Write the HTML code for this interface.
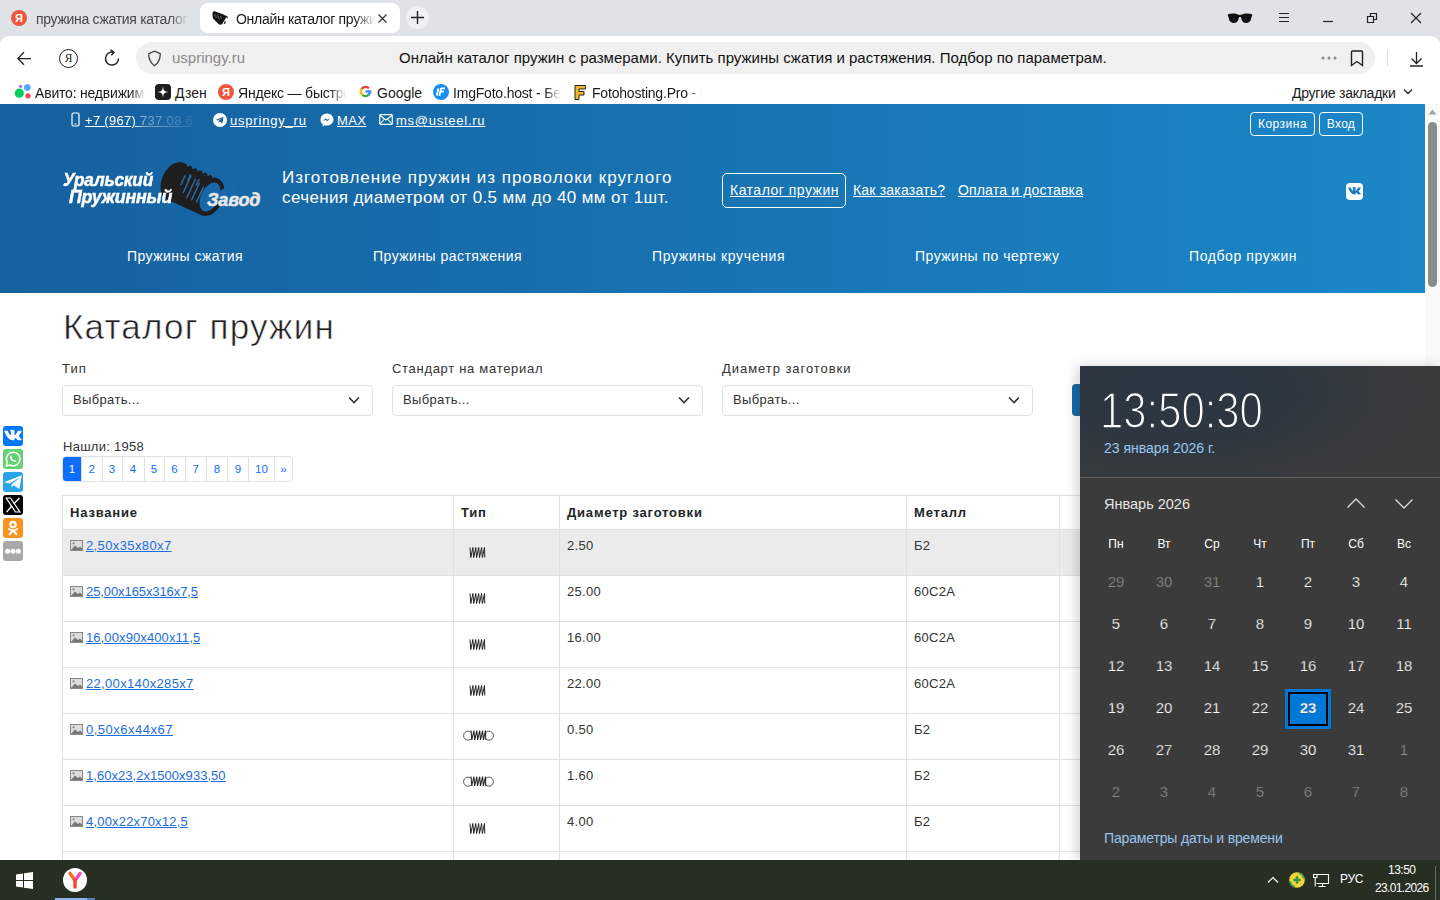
<!DOCTYPE html>
<html><head><meta charset="utf-8">
<style>
*{margin:0;padding:0;box-sizing:border-box}
html,body{width:1440px;height:900px;overflow:hidden;background:#fff;font-family:"Liberation Sans",sans-serif;color:#212529}
.a{position:absolute;white-space:nowrap}
#tabbar{position:absolute;left:0;top:0;width:1440px;height:46px;background:#dfe2e7}
#toolbar{position:absolute;left:0;top:36px;width:1440px;height:40px;background:#fff;border-radius:9px 9px 0 0}
#bmbar{position:absolute;left:0;top:76px;width:1440px;height:28px;background:#fff}
#header{position:absolute;left:0;top:104px;width:1425px;height:189px;background:linear-gradient(90deg,#16609f 0%,#1873b2 50%,#1b87c7 100%)}
#scroll{position:absolute;left:1425px;top:104px;width:15px;height:756px;background:#f9f9f9}
#taskbar{position:absolute;left:0;top:860px;width:1440px;height:40px;background:#272e22}
#cal{position:absolute;left:1080px;top:366px;width:360px;height:494px;background:#3b3b3b;box-shadow:-3px 0 12px rgba(0,0,0,0.18)}
.sel{position:absolute;top:385px;width:311px;height:31px;border:1px solid #dee2e6;border-radius:4px;background:#fff}
.sel span{position:absolute;left:10px;top:6px;font-size:13px;letter-spacing:0.35px;color:#333}
.sel svg{position:absolute;left:285px;top:10px}
.pg{position:absolute;left:62px;top:456px;height:26px;display:flex;border:1px solid #dee2e6;border-radius:4px;overflow:hidden}
.pg div{height:24px;border-left:1px solid #dee2e6;font-size:11.5px;color:#0d6efd;text-align:center;line-height:24px}
.pg div:first-child{border-left:none;width:18px}
.pg .act{background:#0d6efd;color:#fff}
.sh{position:absolute;left:3px;width:20px;height:20px;border-radius:3px}
.sh svg{position:absolute;left:0;top:0}
.tb{border-collapse:collapse;table-layout:fixed;width:1197px}
.tb td{border:1px solid #dee2e6;padding:0 7px;vertical-align:top;font-size:13px;letter-spacing:0.3px;color:#333;height:46px;padding-top:7.5px}
.tb tr.th td{height:34px;letter-spacing:0.8px;font-weight:bold;color:#212529;padding-top:9px}
.tb tr.hl td{background:#ebebeb}
.tb a{color:#1b6dde;text-decoration:underline;letter-spacing:0.4px}
.ty{margin-top:9px;margin-left:7.5px;line-height:0}
.ty.tye{margin-left:1px;margin-top:8.5px}
.cd{position:absolute;width:40px;text-align:center;white-space:nowrap;-webkit-text-stroke:0.25px #3b3b3b}
.logo{font-size:18px;line-height:20px;font-weight:bold;font-style:italic;color:#fff;-webkit-text-stroke:0.5px currentColor;letter-spacing:-0.2px}
</style></head><body>

<div id="tabbar">
  <!-- tab 1 -->
  <div class="a" style="left:11px;top:10px;width:16px;height:16px;border-radius:50%;background:#f0553d;color:#fff;font-size:11px;font-weight:bold;text-align:center;line-height:16px">Я</div>
  <div class="a" style="left:36px;top:11px;width:152px;overflow:hidden;font-size:14px;letter-spacing:-0.3px;color:#474747;-webkit-mask-image:linear-gradient(90deg,#000 88%,transparent)">пружина сжатия каталог пружин</div>
  <!-- active tab -->
  <div class="a" style="left:200px;top:3px;width:200px;height:30px;background:#fff;border-radius:8px"></div>
  <svg class="a" style="left:205px;top:5px" width="30" height="25" viewBox="0 0 30 25"><path d="M7.5 8.5C7.5 6.5 9 6 10.5 6.5L18.5 9.5C20.5 10.300 21.500 11.500 20.500 13.500L17.500 18.500C16.500 20 15 20 13.500 19L8.500 14C7.500 12.800 7.500 10.500 7.500 8.500Z" fill="#151515"/><path d="M9.5 9L11.500 13M12.500 10L14.500 14.500M15.500 11L17 15" stroke="#777" stroke-width="0.8"/><path d="M20.5 11.5C22 11 22.500 12.500 21.800 13.200M19.500 16.500C20.500 16.500 20.200 18 19 18.800" stroke="#222" stroke-width="1.3" fill="none"/><path d="M21 11.2C17.500 11.500 15.500 16 16.500 18.800" stroke="#111" stroke-width="1.5" fill="none"/></svg>
  <div class="a" style="left:236px;top:11px;width:140px;overflow:hidden;font-size:14px;letter-spacing:-0.3px;color:#1a1a1a;-webkit-mask-image:linear-gradient(90deg,#000 85%,transparent)">Онлайн каталог пружин с размерами</div>
  <svg class="a" style="left:377px;top:13px" width="11" height="11" viewBox="0 0 11 11"><path d="M1.5 1.5L9.5 9.5M9.5 1.5L1.5 9.5" stroke="#333" stroke-width="1.2"/></svg>
  <div class="a" style="left:406px;top:6px;width:23px;height:23px;border-radius:50%;background:#eef0f3"></div>
  <svg class="a" style="left:410px;top:10px" width="15" height="15" viewBox="0 0 15 15"><path d="M7.5 1V14M1 7.5H14" stroke="#222" stroke-width="1.4"/></svg>
  <!-- right icons -->
  <svg class="a" style="left:1227px;top:13px" width="26" height="11" viewBox="0 0 26 11"><path d="M0.5 1.5C4 0.2 8.5 0.3 12 2C13.5 1.5 14.5 1.5 14 2C17.5 0.3 22 0.2 25.5 1.5L24.500 4C24 8.500 21.500 10 19 10C15.500 10 14.500 7 14 4.300C13.500 4 12.500 4 12 4.300C11.500 7 10.500 10 7 10C4.500 10 2 8.500 1.500 4Z" fill="#111"/></svg>
  <svg class="a" style="left:1278px;top:12px" width="12" height="11" viewBox="0 0 12 11"><path d="M1 1.5H11M1 5.5H11M1 9.5H11" stroke="#222" stroke-width="1.2"/></svg>
  <svg class="a" style="left:1322px;top:20px" width="12" height="4" viewBox="0 0 12 4"><path d="M1 1.5H11" stroke="#222" stroke-width="1.2"/></svg>
  <svg class="a" style="left:1366px;top:12px" width="12" height="12" viewBox="0 0 12 12"><path d="M1.5 4.5H7.5V10.5H1.5Z M4.5 4.5V1.5H10.5V7.5H7.5" stroke="#222" stroke-width="1.2" fill="none"/></svg>
  <svg class="a" style="left:1410px;top:12px" width="12" height="12" viewBox="0 0 12 12"><path d="M1 1L11 11M11 1L1 11" stroke="#222" stroke-width="1.2"/></svg>
</div>
<div id="toolbar">
  <svg class="a" style="left:16px;top:15px" width="16" height="15" viewBox="0 0 16 15"><path d="M15 7.5H1.8M8 1.2L1.800 7.500L8 13.800" stroke="#222" stroke-width="1.25" fill="none"/></svg>
  <div class="a" style="left:59px;top:13px;width:19px;height:19px;border:1.3px solid #222;border-radius:50%;font-size:11.5px;line-height:16.5px;text-align:center;color:#222;font-family:'Liberation Serif',serif">Я</div>
  <svg class="a" style="left:104px;top:13px" width="17" height="18" viewBox="0 0 17 18"><path d="M14.5 9.5A6.5 6.5 0 1 1 9 3.2" stroke="#222" stroke-width="1.5" fill="none"/><path d="M6.5 0.8L10 3.3L7.3 6.3" stroke="#222" stroke-width="1.5" fill="none"/></svg>
  <div class="a" style="left:136px;top:6px;width:1239px;height:32px;background:#f0f0f0;border-radius:16px"></div>
  <svg class="a" style="left:147px;top:14px" width="15" height="17" viewBox="0 0 15 17"><path d="M7.5 1.2L13.3 3.6C13.3 10 11 13.5 7.5 15.8C4 13.5 1.7 10 1.7 3.6Z" stroke="#444" stroke-width="1.3" fill="none"/></svg>
  <div class="a" style="left:172px;top:13px;font-size:15px;color:#8a8a8a">uspringy.ru</div>
  <div class="a" style="left:399px;top:13px;font-size:15px;color:#111">Онлайн каталог пружин с размерами. Купить пружины сжатия и растяжения. Подбор по параметрам.</div>
  <svg class="a" style="left:1321px;top:20px" width="16" height="4" viewBox="0 0 16 4"><circle cx="2" cy="2" r="1.5" fill="#888"/><circle cx="8" cy="2" r="1.5" fill="#888"/><circle cx="14" cy="2" r="1.5" fill="#888"/></svg>
  <svg class="a" style="left:1350px;top:14px" width="14" height="17" viewBox="0 0 14 17"><path d="M1.5 2C1.5 1.5 2 1 2.5 1H11.5C12 1 12.5 1.5 12.5 2V15.5L7 11.5L1.5 15.5Z" stroke="#222" stroke-width="1.4" fill="none"/></svg>
  <div class="a" style="left:1387px;top:14px;width:1px;height:16px;background:#ddd"></div>
  <svg class="a" style="left:1409px;top:15px" width="15" height="16" viewBox="0 0 15 16"><path d="M7.5 1V12.5M2.5 7.5L7.5 12.5L12.5 7.5M1 15H14" stroke="#222" stroke-width="1.3" fill="none"/></svg>
</div>
<div id="bmbar">
  <svg class="a" style="left:14px;top:8px" width="18" height="17" viewBox="0 0 18 17"><circle cx="5.3" cy="9.2" r="4.6" fill="#00d25f"/><circle cx="13.3" cy="3.6" r="3.3" fill="#49a9ff"/><circle cx="14" cy="11.8" r="2.6" fill="#ff4053"/><circle cx="6.5" cy="2.3" r="1.6" fill="#a169f7"/></svg>
  <div class="a" style="left:35px;top:8.5px;letter-spacing:-0.2px;width:110px;overflow:hidden;font-size:14px;color:#1a1a1a;-webkit-mask-image:linear-gradient(90deg,#000 88%,transparent)">Авито: недвижимость</div>
  <div class="a" style="left:155px;top:8px;width:16px;height:16px;border-radius:4px;background:#1e1e1e"></div>
  <svg class="a" style="left:155px;top:8px" width="16" height="16" viewBox="0 0 16 16"><path d="M8 2.5C8.4 6.5 9.5 7.6 13.5 8C9.5 8.4 8.4 9.5 8 13.5C7.6 9.5 6.5 8.4 2.5 8C6.5 7.6 7.6 6.5 8 2.5Z" fill="#fff"/></svg>
  <div class="a" style="left:175px;top:8.5px;font-size:14px;color:#1a1a1a">Дзен</div>
  <div class="a" style="left:218px;top:8px;width:16px;height:16px;border-radius:50%;background:#f0553d;color:#fff;font-size:11px;font-weight:bold;text-align:center;line-height:16px">Я</div>
  <div class="a" style="left:238px;top:8.5px;letter-spacing:-0.2px;width:108px;overflow:hidden;font-size:14px;color:#1a1a1a;-webkit-mask-image:linear-gradient(90deg,#000 85%,transparent)">Яндекс — быстрый поиск</div>
  <svg class="a" style="left:359px;top:9px" width="13" height="13" viewBox="0 0 13 13"><path d="M11.10 6.50A4.6 4.6 0 0 1 9.46 10.02" stroke="#4285f4" stroke-width="2.4" fill="none"/><path d="M9.58 9.92A4.6 4.6 0 0 1 3.25 9.75" stroke="#34a853" stroke-width="2.4" fill="none"/><path d="M3.36 9.86A4.6 4.6 0 0 1 2.73 3.86" stroke="#fbbc05" stroke-width="2.4" fill="none"/><path d="M2.64 3.99A4.6 4.6 0 0 1 9.92 3.42" stroke="#ea4335" stroke-width="2.4" fill="none"/><path d="M6.5 6.5H12.30" stroke="#4285f4" stroke-width="2.3"/></svg>
  <div class="a" style="left:377px;top:8.5px;font-size:14px;color:#1a1a1a">Google</div>
  <svg class="a" style="left:433px;top:8px" width="16" height="16" viewBox="0 0 16 16"><circle cx="8" cy="8" r="8" fill="#1a8ff0"/><path d="M5.3 4.5L3.8 11.5M8 4.3H12M7.600 7.600H10.800M8 4.300L6.400 12" stroke="#fff" stroke-width="1.8" fill="none"/></svg>
  <div class="a" style="left:453px;top:8.5px;letter-spacing:-0.2px;width:108px;overflow:hidden;font-size:14px;color:#1a1a1a;-webkit-mask-image:linear-gradient(90deg,#000 85%,transparent)">ImgFoto.host - Бесплатный</div>
  <svg class="a" style="left:573px;top:8px" width="14" height="17" viewBox="0 0 14 17"><path d="M2 1.5H12.5V5H6V7.5H11V11H6V15.5H2Z" fill="#f5b82e" stroke="#222" stroke-width="1"/></svg>
  <div class="a" style="left:592px;top:8.5px;letter-spacing:-0.2px;width:110px;overflow:hidden;font-size:14px;color:#1a1a1a;-webkit-mask-image:linear-gradient(90deg,#000 88%,transparent)">Fotohosting.Pro - Бесплатный</div>
  <div class="a" style="left:1292px;top:8.5px;font-size:14px;letter-spacing:-0.25px;color:#1a1a1a">Другие закладки</div>
  <svg class="a" style="left:1403px;top:12px" width="10" height="7" viewBox="0 0 10 7"><path d="M1 1.5L5 5.5L9 1.5" stroke="#222" stroke-width="1.3" fill="none"/></svg>
</div>

<div id="header">
  <!-- contacts row (y relative to 104) -->
  <svg class="a" style="left:71px;top:8px" width="9" height="15" viewBox="0 0 9 15"><rect x="1" y="1" width="7" height="13" rx="1.5" stroke="#fff" stroke-width="1.2" fill="none"/><path d="M3.5 12H5.5" stroke="#fff" stroke-width="1"/></svg>
  <div class="a" style="left:85px;top:9px;letter-spacing:0.3px;font-size:13px;color:#fff;text-decoration:underline;-webkit-mask-image:linear-gradient(90deg,#000 45%,rgba(0,0,0,.45) 55%,rgba(0,0,0,.25) 80%,rgba(0,0,0,.1))">+7 (967) 737 08 6</div>
  <svg class="a" style="left:213px;top:9px" width="14" height="14" viewBox="0 0 14 14"><circle cx="7" cy="7" r="7" fill="#fff"/><path d="M3 6.8L10.5 3.8L9.3 10.5L6.8 8.6L5.6 9.8L5.6 8L9 5L4.8 7.6Z" fill="#1a5f9e"/></svg>
  <div class="a" style="left:230px;top:9px;letter-spacing:0.8px;font-size:13px;color:#fff;text-decoration:underline">uspringy_ru</div>
  <svg class="a" style="left:320px;top:9px" width="14" height="14" viewBox="0 0 14 14"><path d="M7 0.5C3.2 0.5 0.5 3.3 0.5 6.7C0.5 8.6 1.3 10.2 2.7 11.3V13.5L4.8 12.3C5.5 12.5 6.2 12.6 7 12.6C10.8 12.6 13.5 9.9 13.5 6.6C13.5 3.3 10.8 0.5 7 0.5Z" fill="#fff"/><path d="M2.8 8.3L5.8 5.2L7.3 6.8L10.3 5.2L7.3 8.3L5.8 6.8Z" fill="#1a5f9e"/></svg>
  <div class="a" style="left:337px;top:9px;letter-spacing:0.35px;font-size:13px;color:#fff;text-decoration:underline">MAX</div>
  <svg class="a" style="left:379px;top:10px" width="14" height="11" viewBox="0 0 14 11"><rect x="0.7" y="0.7" width="12.6" height="9.6" rx="1" stroke="#fff" stroke-width="1.2" fill="none"/><path d="M1 1.5L7 6L13 1.5M1 10L5 5.5M13 10L9 5.5" stroke="#fff" stroke-width="1.1" fill="none"/></svg>
  <div class="a" style="left:396px;top:9px;letter-spacing:0.74px;font-size:13px;color:#fff;text-decoration:underline">ms@usteel.ru</div>
  <div class="a" style="left:1250px;top:8px;width:65px;height:24px;border:1px solid #fff;border-radius:4px;font-size:12px;letter-spacing:0.5px;color:#fff;text-align:center;line-height:22px">Корзина</div>
  <div class="a" style="left:1319px;top:8px;width:44px;height:24px;border:1px solid #fff;border-radius:4px;font-size:12px;letter-spacing:0.3px;color:#fff;text-align:center;line-height:22px">Вход</div>
  <!-- logo -->
  <svg class="a" style="left:0;top:0" width="300" height="189" viewBox="0 0 300 189">
    <g fill="#1e1e1e">
      <ellipse cx="175" cy="77" rx="13" ry="20" transform="rotate(24.6 175 77)"/>
      <polygon points="183.3,58.8 218.3,74.8 201.7,111.2 166.7,95.2"/>
      <ellipse cx="210" cy="93" rx="13" ry="20" transform="rotate(24.6 210 93)"/>
    </g>
    <path d="M185.0 71.7L180.9 80.8" stroke="#2d6aa3" stroke-width="1.5" stroke-linecap="round"/><path d="M190.8 72.1L183.3 88.5" stroke="#2d6aa3" stroke-width="1.5" stroke-linecap="round"/><path d="M195.3 75.3L186.9 93.5" stroke="#2d6aa3" stroke-width="1.5" stroke-linecap="round"/><path d="M199.3 79.3L191.8 95.7" stroke="#2d6aa3" stroke-width="1.5" stroke-linecap="round"/><path d="M203.4 83.4L196.7 97.9" stroke="#2d6aa3" stroke-width="1.5" stroke-linecap="round"/><path d="M190.5 70.9L188.0 76.3" stroke="#2d6aa3" stroke-width="1.5" stroke-linecap="round"/><path d="M198.8 75.8L196.3 81.3" stroke="#2d6aa3" stroke-width="1.5" stroke-linecap="round"/><circle cx="188.1" cy="61.6" r="1.1" fill="#1868a9"/><circle cx="193.1" cy="63.9" r="1.1" fill="#1868a9"/><circle cx="198.1" cy="66.2" r="1.1" fill="#1868a9"/><circle cx="203.1" cy="68.5" r="1.1" fill="#1868a9"/><circle cx="208.1" cy="70.8" r="1.1" fill="#1868a9"/><circle cx="213.1" cy="73.1" r="1.1" fill="#1868a9"/>
    <ellipse cx="210" cy="93" rx="9" ry="15.5" transform="rotate(24.6 210 93)" fill="#1868a9"/>
    <path d="M210 93 L235 78 L235 109 Z" fill="#1868a9"/>
  </svg>
  <div class="a logo" style="left:63px;top:65.5px;transform:scaleX(0.955);transform-origin:0 0">Уральский</div>
  <div class="a logo" style="left:69px;top:83px;transform:scaleX(0.99);transform-origin:0 0">Пружинный</div>
  <div class="a logo" style="left:207px;top:85.5px;color:#e8e8e8;transform:scaleX(1.0);transform-origin:0 0">Завод</div>
  <!-- tagline -->
  <div class="a" style="left:282px;top:64px;font-size:17px;line-height:19.7px;color:#fff"><span style="letter-spacing:0.98px">Изготовление пружин из проволоки круглого</span><br><span style="letter-spacing:0.38px">сечения диаметром от 0.5 мм до 40 мм от 1шт.</span></div>
  <div class="a" style="left:722px;top:69px;width:124px;height:35px;border:1px solid #fff;border-radius:5px"></div>
  <div class="a" style="left:730px;top:78px;letter-spacing:0.49px;font-size:14px;color:#fff;text-decoration:underline">Каталог пружин</div>
  <div class="a" style="left:853px;top:78px;letter-spacing:0.2px;font-size:14px;color:#fff;text-decoration:underline">Как заказать?</div>
  <div class="a" style="left:958px;top:78px;letter-spacing:0.16px;font-size:14px;color:#fff;text-decoration:underline">Оплата и доставка</div>
  <div class="a" style="left:1346px;top:79px;width:17px;height:17px;border-radius:4px;background:#fff"></div>
  <svg class="a" style="left:1346px;top:79px" width="17" height="17" viewBox="0 0 20 20"><path d="M11 15.5C11.5 15.5 11.7 15.1 11.7 14.7C11.7 13.1 12.300 12.200 13.400 13.300C14.600 14.600 14.900 15.500 16.400 15.500H19C19.700 15.500 19.900 15.300 19.900 14.900C19.900 14.200 18.700 12.900 17.700 12C16.300 10.700 16.300 10.700 17.500 9.100C19 7.200 20.900 4.600 19.200 4.600H15.900C15.200 4.600 15.200 5 15 5.500C14.200 7.500 12.600 10 12 9.600C11.400 9.200 11.700 7.600 11.700 5.200C11.700 4.600 11.700 4.100 10.700 3.900C10.200 3.800 9.700 3.700 9.200 3.700C7.300 3.700 6 4.500 6.800 4.700C8.100 4.900 8 7.700 7.700 9C7.200 11.100 5.200 7.300 4.300 5.400C4.100 4.900 4.100 4.600 3.400 4.600H0.700C0.300 4.600 0 4.700 0 5C0 5.500 2.500 10.600 4.800 13.100C7.100 15.600 9.400 15.500 11 15.500Z" transform="translate(2.5 1.8) scale(0.75)" fill="#1b7dbd"/></svg>
  <!-- nav -->
  <div class="a" style="left:127px;top:144px;letter-spacing:0.46px;font-size:14px;color:#fff">Пружины сжатия</div>
  <div class="a" style="left:373px;top:144px;letter-spacing:0.47px;font-size:14px;color:#fff">Пружины растяжения</div>
  <div class="a" style="left:652px;top:144px;letter-spacing:0.66px;font-size:14px;color:#fff">Пружины кручения</div>
  <div class="a" style="left:915px;top:144px;letter-spacing:0.47px;font-size:14px;color:#fff">Пружины по чертежу</div>
  <div class="a" style="left:1189px;top:144px;letter-spacing:0.59px;font-size:14px;color:#fff">Подбор пружин</div>
</div>
<div id="scroll">
  <svg class="a" style="left:3px;top:5px" width="9" height="6" viewBox="0 0 9 6"><path d="M0.5 5.5L4.5 0.5L8.5 5.5Z" fill="#a3a3a3"/></svg>
  <div class="a" style="left:3px;top:18px;width:9px;height:165px;border-radius:5px;background:#8b8b8b"></div>
</div>
<div id="content">
  <div class="a" style="left:63px;top:307px;font-size:35px;letter-spacing:1.2px;color:#222;-webkit-text-stroke:0.6px #fff">Каталог пружин</div>
  <div class="a" style="left:62px;top:361px;font-size:13px;letter-spacing:1.1px;color:#333">Тип</div>
  <div class="a" style="left:392px;top:361px;font-size:13px;letter-spacing:0.7px;color:#333">Стандарт на материал</div>
  <div class="a" style="left:722px;top:361px;font-size:13px;letter-spacing:0.95px;color:#333">Диаметр заготовки</div>
  <div class="sel" style="left:62px"><span>Выбрать...</span><svg width="12" height="8" viewBox="0 0 12 8"><path d="M1 1.5L6 6.5L11 1.5" stroke="#333" stroke-width="1.6" fill="none"/></svg></div>
  <div class="sel" style="left:392px"><span>Выбрать...</span><svg width="12" height="8" viewBox="0 0 12 8"><path d="M1 1.5L6 6.5L11 1.5" stroke="#333" stroke-width="1.6" fill="none"/></svg></div>
  <div class="sel" style="left:722px"><span>Выбрать...</span><svg width="12" height="8" viewBox="0 0 12 8"><path d="M1 1.5L6 6.5L11 1.5" stroke="#333" stroke-width="1.6" fill="none"/></svg></div>
  <div class="a" style="left:1072px;top:384px;width:20px;height:32px;border-radius:4px;background:#1a6aa8"></div>
  <div class="a" style="left:63px;top:439px;font-size:13px;letter-spacing:0.27px;color:#333">Нашли: 1958</div>
  <div class="pg">
    <div class="act" style="width:18px">1</div><div style="width:20.5px">2</div><div style="width:20px">3</div><div style="width:22px">4</div><div style="width:20px">5</div><div style="width:21px">6</div><div style="width:21.5px">7</div><div style="width:21px">8</div><div style="width:21px">9</div><div style="width:26px">10</div><div style="width:18px">»</div>
  </div>
  <!-- share -->
  <div class="sh" style="top:426px;background:#0077ff"><svg width="20" height="20" viewBox="0 0 20 20"><path d="M11 15.5C11.5 15.5 11.7 15.1 11.7 14.7C11.7 13.1 12.300 12.200 13.400 13.300C14.600 14.600 14.900 15.500 16.400 15.500H19C19.700 15.500 19.900 15.300 19.900 14.900C19.900 14.200 18.700 12.900 17.700 12C16.300 10.700 16.300 10.700 17.500 9.100C19 7.200 20.900 4.600 19.200 4.600H15.900C15.200 4.600 15.200 5 15 5.500C14.200 7.500 12.600 10 12 9.600C11.400 9.200 11.700 7.600 11.700 5.200C11.700 4.600 11.700 4.100 10.700 3.900C10.200 3.800 9.700 3.700 9.200 3.700C7.300 3.700 6 4.500 6.800 4.700C8.100 4.900 8 7.700 7.700 9C7.200 11.100 5.200 7.300 4.300 5.400C4.100 4.900 4.100 4.600 3.400 4.600H0.700C0.300 4.600 0 4.700 0 5C0 5.500 2.500 10.600 4.800 13.100C7.100 15.600 9.400 15.500 11 15.500Z" transform="translate(1.2 0.6) scale(0.88)" fill="#fff"/></svg></div>
  <div class="sh" style="top:449px;background:#65d072"><svg width="20" height="20" viewBox="0 0 20 20"><path d="M10.2 3.2A6.8 6.8 0 0 0 4.3 13.400L3.200 17L7 16A6.800 6.800 0 1 0 10.200 3.200Z" fill="none" stroke="#fff" stroke-width="1.5"/><path d="M7.6 6.8C7.9 6.4 8.3 6.5 8.5 6.900L9.100 8.200C9.200 8.500 8.900 8.800 8.700 9C9.200 10.100 10 10.900 11.100 11.400C11.300 11.200 11.600 10.900 11.900 11L13.100 11.600C13.500 11.800 13.600 12.200 13.200 12.500C12.300 13.400 11.200 13.300 9.700 12.300C8.300 11.300 7.300 10 7 8.900C6.800 8 7.100 7.300 7.600 6.800Z" fill="#fff"/></svg></div>
  <div class="sh" style="top:472px;background:#2aa4e6"><svg width="20" height="20" viewBox="0 0 20 20"><path d="M1 10.200L18.800 3.300L16.300 17L10.600 13.300L8.300 15.400L8.800 12.100L15.300 6.300L6.600 11.600Z" fill="#fff"/><path d="M8.8 12.1L16 6" stroke="#2aa4e6" stroke-width="0.6"/></svg></div>
  <div class="sh" style="top:495px;background:#000"><svg width="20" height="20" viewBox="0 0 20 20"><path d="M3.2 3H7.600L16.900 17H12.500Z" fill="none" stroke="#fff" stroke-width="1.2"/><path d="M3.6 17L9.1 10.800M10.900 8.800L16.400 3" stroke="#fff" stroke-width="1.3"/></svg></div>
  <div class="sh" style="top:518px;background:#f7931e"><svg width="20" height="20" viewBox="0 0 20 20"><circle cx="10" cy="6.6" r="2.7" fill="none" stroke="#fff" stroke-width="2.1"/><path d="M6 11C8.300 12.600 11.700 12.600 14 11M10 12.300L6.600 16.300M10 12.300L13.400 16.300" stroke="#fff" stroke-width="2.1" fill="none" stroke-linecap="round"/></svg></div>
  <div class="sh" style="top:541px;background:#a8a8a8"><svg width="20" height="20" viewBox="0 0 20 20"><circle cx="4.6" cy="10.3" r="2.5" fill="#fff"/><circle cx="10" cy="10.3" r="2.5" fill="#fff"/><circle cx="15.4" cy="10.3" r="2.5" fill="#fff"/></svg></div>
  <!-- table -->
  <div class="a" style="left:62px;top:495px;width:1020px;height:365px;overflow:hidden">
  <table class="tb">
    <colgroup><col style="width:391px"><col style="width:106px"><col style="width:347px"><col style="width:153px"><col style="width:200px"></colgroup>
    <tr class="th"><td>Название</td><td>Тип</td><td>Диаметр заготовки</td><td>Металл</td><td></td></tr>
    <tr class="hl"><td><svg width="13" height="11" viewBox="0 0 13 11" style="vertical-align:-1px;margin-right:3px"><rect x="0" y="0" width="13" height="11" fill="#888"/><rect x="1" y="1" width="11" height="9" fill="#ddd"/><path d="M1 10L5 5.5L8 8L10 6.5L12 8.500V10Z" fill="#777"/><circle cx="3.5" cy="3.3" r="1.1" fill="#888"/></svg><a style="letter-spacing:0.38px">2,50x35x80x7</a></td><td><div class="ty tyc"><svg width="17" height="11" viewBox="0 0 17 11"><path d="M1 0.5L1.8 10.5L3.9 0.5L4.7 10.5L6.8 0.5L7.6 10.5L9.7 0.5L10.5 10.5L12.6 0.5L13.4 10.5L15.5 0.5L15.8 10.5" stroke="#222" stroke-width="1" fill="none"/></svg></div></td><td>2.50</td><td>Б2</td><td></td></tr><tr><td><svg width="13" height="11" viewBox="0 0 13 11" style="vertical-align:-1px;margin-right:3px"><rect x="0" y="0" width="13" height="11" fill="#888"/><rect x="1" y="1" width="11" height="9" fill="#ddd"/><path d="M1 10L5 5.5L8 8L10 6.5L12 8.500V10Z" fill="#777"/><circle cx="3.5" cy="3.3" r="1.1" fill="#888"/></svg><a style="letter-spacing:-0.09px">25,00x165x316x7,5</a></td><td><div class="ty tyc"><svg width="17" height="11" viewBox="0 0 17 11"><path d="M1 0.5L1.8 10.5L3.9 0.5L4.7 10.5L6.8 0.5L7.6 10.5L9.7 0.5L10.5 10.5L12.6 0.5L13.4 10.5L15.5 0.5L15.8 10.5" stroke="#222" stroke-width="1" fill="none"/></svg></div></td><td>25.00</td><td>60С2А</td><td></td></tr><tr><td><svg width="13" height="11" viewBox="0 0 13 11" style="vertical-align:-1px;margin-right:3px"><rect x="0" y="0" width="13" height="11" fill="#888"/><rect x="1" y="1" width="11" height="9" fill="#ddd"/><path d="M1 10L5 5.5L8 8L10 6.5L12 8.500V10Z" fill="#777"/><circle cx="3.5" cy="3.3" r="1.1" fill="#888"/></svg><a style="letter-spacing:0.1px">16,00x90x400x11,5</a></td><td><div class="ty tyc"><svg width="17" height="11" viewBox="0 0 17 11"><path d="M1 0.5L1.8 10.5L3.9 0.5L4.7 10.5L6.8 0.5L7.6 10.5L9.7 0.5L10.5 10.5L12.6 0.5L13.4 10.5L15.5 0.5L15.8 10.5" stroke="#222" stroke-width="1" fill="none"/></svg></div></td><td>16.00</td><td>60С2А</td><td></td></tr><tr><td><svg width="13" height="11" viewBox="0 0 13 11" style="vertical-align:-1px;margin-right:3px"><rect x="0" y="0" width="13" height="11" fill="#888"/><rect x="1" y="1" width="11" height="9" fill="#ddd"/><path d="M1 10L5 5.5L8 8L10 6.5L12 8.500V10Z" fill="#777"/><circle cx="3.5" cy="3.3" r="1.1" fill="#888"/></svg><a style="letter-spacing:0.33px">22,00x140x285x7</a></td><td><div class="ty tyc"><svg width="17" height="11" viewBox="0 0 17 11"><path d="M1 0.5L1.8 10.5L3.9 0.5L4.7 10.5L6.8 0.5L7.6 10.5L9.7 0.5L10.5 10.5L12.6 0.5L13.4 10.5L15.5 0.5L15.8 10.5" stroke="#222" stroke-width="1" fill="none"/></svg></div></td><td>22.00</td><td>60С2А</td><td></td></tr><tr><td><svg width="13" height="11" viewBox="0 0 13 11" style="vertical-align:-1px;margin-right:3px"><rect x="0" y="0" width="13" height="11" fill="#888"/><rect x="1" y="1" width="11" height="9" fill="#ddd"/><path d="M1 10L5 5.5L8 8L10 6.5L12 8.500V10Z" fill="#777"/><circle cx="3.5" cy="3.3" r="1.1" fill="#888"/></svg><a style="letter-spacing:0.5px">0,50x6x44x67</a></td><td><div class="ty tye"><svg width="33" height="11" viewBox="0 0 33 11"><path d="M9 0.5L9.8 10L11.9 0.5L12.7 10L14.8 0.5L15.6 10L17.7 0.5L18.5 10L20.6 0.5L21.4 10L23.5 0.5L23.8 10" stroke="#222" stroke-width="1.05" fill="none"/><path d="M9.3 2.5A4.5 4.5 0 1 0 9.3 8.8M23.7 2.5A4.5 4.5 0 1 1 23.7 8.8" stroke="#444" stroke-width="0.9" fill="none"/></svg></div></td><td>0.50</td><td>Б2</td><td></td></tr><tr><td><svg width="13" height="11" viewBox="0 0 13 11" style="vertical-align:-1px;margin-right:3px"><rect x="0" y="0" width="13" height="11" fill="#888"/><rect x="1" y="1" width="11" height="9" fill="#ddd"/><path d="M1 10L5 5.5L8 8L10 6.5L12 8.500V10Z" fill="#777"/><circle cx="3.5" cy="3.3" r="1.1" fill="#888"/></svg><a style="letter-spacing:0.04px">1,60x23,2x1500x933,50</a></td><td><div class="ty tye"><svg width="33" height="11" viewBox="0 0 33 11"><path d="M9 0.5L9.8 10L11.9 0.5L12.7 10L14.8 0.5L15.6 10L17.7 0.5L18.5 10L20.6 0.5L21.4 10L23.5 0.5L23.8 10" stroke="#222" stroke-width="1.05" fill="none"/><path d="M9.3 2.5A4.5 4.5 0 1 0 9.3 8.8M23.7 2.5A4.5 4.5 0 1 1 23.7 8.8" stroke="#444" stroke-width="0.9" fill="none"/></svg></div></td><td>1.60</td><td>Б2</td><td></td></tr><tr><td><svg width="13" height="11" viewBox="0 0 13 11" style="vertical-align:-1px;margin-right:3px"><rect x="0" y="0" width="13" height="11" fill="#888"/><rect x="1" y="1" width="11" height="9" fill="#ddd"/><path d="M1 10L5 5.5L8 8L10 6.5L12 8.500V10Z" fill="#777"/><circle cx="3.5" cy="3.3" r="1.1" fill="#888"/></svg><a style="letter-spacing:0.19px">4,00x22x70x12,5</a></td><td><div class="ty tyc"><svg width="17" height="11" viewBox="0 0 17 11"><path d="M1 0.5L1.8 10.5L3.9 0.5L4.7 10.5L6.8 0.5L7.6 10.5L9.7 0.5L10.5 10.5L12.6 0.5L13.4 10.5L15.5 0.5L15.8 10.5" stroke="#222" stroke-width="1" fill="none"/></svg></div></td><td>4.00</td><td>Б2</td><td></td></tr><tr><td></td><td><div class="ty ty"></div></td><td></td><td></td><td></td></tr>
  </table>
  </div>
</div>
<div id="cal">
  <div class="a" style="left:0;top:0;width:360px;height:111px;background:radial-gradient(ellipse 250px 105px at 100px 28px,#2b3641 0%,#2e3740 45%,#363a3e 80%,#3b3b3b 100%)"></div>
  <div class="a" style="left:20px;top:16px;font-size:49.5px;color:#fff;transform:scaleX(0.845);transform-origin:0 0;-webkit-text-stroke:1.5px #2e3841">13:50:30</div>
  <div class="a" style="left:24px;top:74px;font-size:14px;color:#99c9f3">23 января 2026 г.</div>
  <div class="a" style="left:0;top:111px;width:360px;height:1px;background:#5f5f5f"></div>
  <div class="a" style="left:24px;top:130px;font-size:14.5px;color:#e6e6e6">Январь 2026</div>
  <svg class="a" style="left:1346px;top:131px;left:266px" width="20" height="12" viewBox="0 0 20 12"><path d="M1.5 10.5L10 2L18.5 10.5" stroke="#ddd" stroke-width="1.3" fill="none"/></svg>
  <svg class="a" style="left:314px;top:132px" width="20" height="12" viewBox="0 0 20 12"><path d="M1.5 1.5L10 10L18.5 1.5" stroke="#ddd" stroke-width="1.3" fill="none"/></svg>
  <div class="cd" style="left:16px;top:171px;font-size:12px;color:#fff;-webkit-text-stroke:0">Пн</div><div class="cd" style="left:64px;top:171px;font-size:12px;color:#fff;-webkit-text-stroke:0">Вт</div><div class="cd" style="left:112px;top:171px;font-size:12px;color:#fff;-webkit-text-stroke:0">Ср</div><div class="cd" style="left:160px;top:171px;font-size:12px;color:#fff;-webkit-text-stroke:0">Чт</div><div class="cd" style="left:208px;top:171px;font-size:12px;color:#fff;-webkit-text-stroke:0">Пт</div><div class="cd" style="left:256px;top:171px;font-size:12px;color:#fff;-webkit-text-stroke:0">Сб</div><div class="cd" style="left:304px;top:171px;font-size:12px;color:#fff;-webkit-text-stroke:0">Вс</div>
  <div class="cd" style="left:16px;top:207px;font-size:15px;color:#8a8a8a">29</div><div class="cd" style="left:64px;top:207px;font-size:15px;color:#8a8a8a">30</div><div class="cd" style="left:112px;top:207px;font-size:15px;color:#8a8a8a">31</div><div class="cd" style="left:160px;top:207px;font-size:15px;color:#fff">1</div><div class="cd" style="left:208px;top:207px;font-size:15px;color:#fff">2</div><div class="cd" style="left:256px;top:207px;font-size:15px;color:#fff">3</div><div class="cd" style="left:304px;top:207px;font-size:15px;color:#fff">4</div><div class="cd" style="left:16px;top:249px;font-size:15px;color:#fff">5</div><div class="cd" style="left:64px;top:249px;font-size:15px;color:#fff">6</div><div class="cd" style="left:112px;top:249px;font-size:15px;color:#fff">7</div><div class="cd" style="left:160px;top:249px;font-size:15px;color:#fff">8</div><div class="cd" style="left:208px;top:249px;font-size:15px;color:#fff">9</div><div class="cd" style="left:256px;top:249px;font-size:15px;color:#fff">10</div><div class="cd" style="left:304px;top:249px;font-size:15px;color:#fff">11</div><div class="cd" style="left:16px;top:291px;font-size:15px;color:#fff">12</div><div class="cd" style="left:64px;top:291px;font-size:15px;color:#fff">13</div><div class="cd" style="left:112px;top:291px;font-size:15px;color:#fff">14</div><div class="cd" style="left:160px;top:291px;font-size:15px;color:#fff">15</div><div class="cd" style="left:208px;top:291px;font-size:15px;color:#fff">16</div><div class="cd" style="left:256px;top:291px;font-size:15px;color:#fff">17</div><div class="cd" style="left:304px;top:291px;font-size:15px;color:#fff">18</div><div class="cd" style="left:16px;top:333px;font-size:15px;color:#fff">19</div><div class="cd" style="left:64px;top:333px;font-size:15px;color:#fff">20</div><div class="cd" style="left:112px;top:333px;font-size:15px;color:#fff">21</div><div class="cd" style="left:160px;top:333px;font-size:15px;color:#fff">22</div><div class="a" style="left:205px;top:323px;width:46px;height:40px;background:#0078d7;border:2px solid #0078d7"><div style="position:absolute;left:1px;top:1px;right:1px;bottom:1px;border:2px solid #000"></div></div><div class="cd" style="left:208px;top:333px;font-size:15px;font-weight:bold;color:#fff">23</div><div class="cd" style="left:256px;top:333px;font-size:15px;color:#fff">24</div><div class="cd" style="left:304px;top:333px;font-size:15px;color:#fff">25</div><div class="cd" style="left:16px;top:375px;font-size:15px;color:#fff">26</div><div class="cd" style="left:64px;top:375px;font-size:15px;color:#fff">27</div><div class="cd" style="left:112px;top:375px;font-size:15px;color:#fff">28</div><div class="cd" style="left:160px;top:375px;font-size:15px;color:#fff">29</div><div class="cd" style="left:208px;top:375px;font-size:15px;color:#fff">30</div><div class="cd" style="left:256px;top:375px;font-size:15px;color:#fff">31</div><div class="cd" style="left:304px;top:375px;font-size:15px;color:#8a8a8a">1</div><div class="cd" style="left:16px;top:417px;font-size:15px;color:#8a8a8a">2</div><div class="cd" style="left:64px;top:417px;font-size:15px;color:#8a8a8a">3</div><div class="cd" style="left:112px;top:417px;font-size:15px;color:#8a8a8a">4</div><div class="cd" style="left:160px;top:417px;font-size:15px;color:#8a8a8a">5</div><div class="cd" style="left:208px;top:417px;font-size:15px;color:#8a8a8a">6</div><div class="cd" style="left:256px;top:417px;font-size:15px;color:#8a8a8a">7</div><div class="cd" style="left:304px;top:417px;font-size:15px;color:#8a8a8a">8</div>
  <div class="a" style="left:24px;top:464px;font-size:14px;letter-spacing:-0.15px;color:#9ac6ee">Параметры даты и времени</div>
</div>
<div id="taskbar">
  <svg class="a" style="left:16px;top:12px" width="17" height="17" viewBox="0 0 17 17"><path d="M0 2.4L7 1.4V8H0Z M8 1.3L17 0V8H8Z M0 9H7V15.6L0 14.6Z M8 9H17V17L8 15.7Z" fill="#fff"/></svg>
  <div class="a" style="left:63px;top:8px;width:24px;height:24px;border-radius:50%;background:#fff"></div>
  <svg class="a" style="left:63px;top:8px" width="24" height="24" viewBox="0 0 24 24"><path d="M7 5.5L12 12.5" stroke="#ff6a1f" stroke-width="3.4" stroke-linecap="round"/><path d="M17 5.5L12 12.5" stroke="#f04ab8" stroke-width="3.4" stroke-linecap="round"/><path d="M12 12.5V19" stroke="#ff3d2e" stroke-width="3.4" stroke-linecap="round"/></svg>
  <div class="a" style="left:55px;top:38px;width:32px;height:2px;background:#8cb6e6"></div><div class="a" style="left:87px;top:38px;width:8px;height:2px;background:#5a82b0"></div>
  <svg class="a" style="left:1267px;top:16px" width="12" height="8" viewBox="0 0 12 8"><path d="M1 6.5L6 1.5L11 6.5" stroke="#fff" stroke-width="1.2" fill="none"/></svg>
  <svg class="a" style="left:1289px;top:12px" width="16" height="16" viewBox="0 0 16 16"><circle cx="8" cy="8" r="7.8" fill="#f1d53a"/><path d="M1.2 9.5A7 7 0 0 0 6 14.8" stroke="#3aa54a" stroke-width="1.6" fill="none"/><path d="M10 1.3A7 7 0 0 1 14.8 6.5" stroke="#3aa54a" stroke-width="1.6" fill="none"/><path d="M8 4.3V11.7M4.3 8H11.7" stroke="#2f9b3e" stroke-width="2.4"/></svg>
  <svg class="a" style="left:1313px;top:13px" width="17" height="15" viewBox="0 0 17 15"><path d="M3.5 1.5H15.5V10.5H3.5" stroke="#fff" stroke-width="1.1" fill="none"/><path d="M0.5 1.5H4V4.5H0.5Z" stroke="#fff" stroke-width="1.1" fill="none"/><path d="M2.2 4.5V13.5M9.5 10.5V13.5M5.5 13.5H12.5" stroke="#fff" stroke-width="1.1" fill="none"/></svg>
  <div class="a" style="left:1340px;top:12px;font-size:12px;color:#fff;letter-spacing:-0.3px">РУС</div>
  <div class="a" style="left:1388px;top:3px;font-size:12px;color:#fff;letter-spacing:-0.5px">13:50</div>
  <div class="a" style="left:1375px;top:21px;font-size:12px;color:#fff;letter-spacing:-0.65px">23.01.2026</div>
  <div class="a" style="left:1435px;top:6px;width:1px;height:34px;background:#6b6b6b"></div>
</div>
</body></html>
